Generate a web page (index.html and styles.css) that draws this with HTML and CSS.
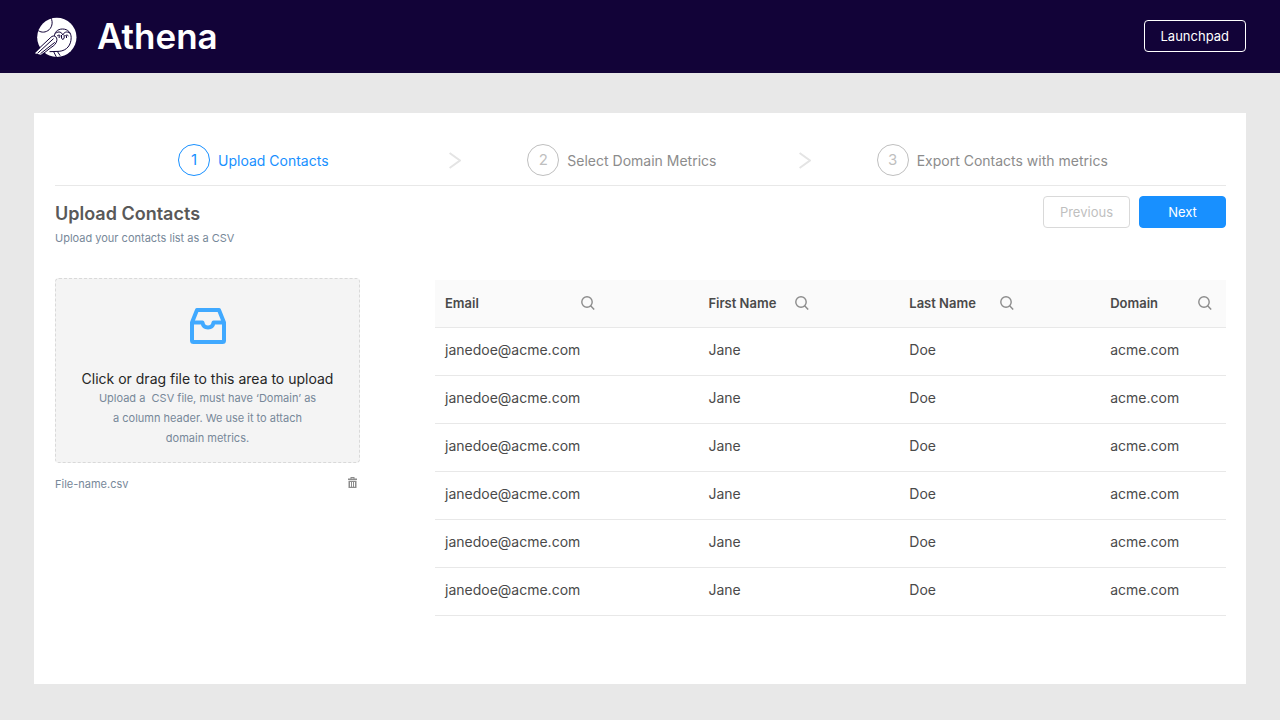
FILE: index.html
```html
<!DOCTYPE html>
<html lang="en">
<head>
  <meta charset="UTF-8">
  <meta name="viewport" content="width=device-width,initial-scale=1">
  <title>Athena</title>
  <link rel="stylesheet" href="styles.css">
</head>
<body>

  <svg class="sprite" aria-hidden="true">
    <symbol id="search" viewBox="0 0 14 14">
      <circle cx="6" cy="6" r="5.2"/>
      <path d="M9.6 9.8 13.2 13.6"/>
    </symbol>
    <symbol id="chevron" viewBox="0 0 12 17">
      <path d="M.6 1 11 8.500.6 16"/>
    </symbol>
  </svg>

  <header class="topbar">
    <div class="brand">
      <svg class="logo" viewBox="16 12 128 123" aria-hidden="true">
        <circle class="disc" cx="84" cy="73" r="59"/>
        <path class="line" d="M66 14C74 28 69 46 57 53C46 60 34 58 26 51"/>
        <path class="line" d="M77 74C75 58 86 48 101 48C117 48 127 59 127 74C127 96 114 113 91 115L62 116"/>
        <path class="line" d="M80 61C90 53 99 58 102 66C105 58 114 53 124 61M98 66V75L102 80L106 75V66M85 69C88 65 93 66 95 69M109 69C111 66 116 65 119 69M91 68V75M113 68V75"/>
        <path class="wing" d="M18 121 66 73C75 64 86 71 84 83C82 92 76 98 66 104L36 125Z"/>
        <path class="line" d="M18 118 66 73C75 64 86 71 84 83C82 92 76 98 66 104L42 123M26 121 74 77M35 122 78 88M75 117 83 133M86 116 94 128"/>
      </svg>
      <h1>Athena</h1>
    </div>
    <button class="btn btn-ghost" type="button">Launchpad</button>
  </header>

  <main>
    <section class="card">
      <ol class="steps">
        <li class="step active">
          <span class="num">1</span><span>Upload Contacts</span>
          <svg class="chevron" aria-hidden="true"><use href="#chevron"/></svg>
        </li>
        <li class="step">
          <span class="num">2</span><span>Select Domain Metrics</span>
          <svg class="chevron" aria-hidden="true"><use href="#chevron"/></svg>
        </li>
        <li class="step">
          <span class="num">3</span><span>Export Contacts with metrics</span>
        </li>
      </ol>

      <div class="heading">
        <div>
          <h2>Upload Contacts</h2>
          <p>Upload your contacts list as a CSV</p>
        </div>
        <div class="actions">
          <button class="btn" type="button" disabled>Previous</button>
          <button class="btn btn-primary" type="button">Next</button>
        </div>
      </div>

      <div class="content">
        <div class="upload">
          <input class="file-input" type="file" id="file" accept=".csv">
          <label class="dropzone" for="file">
            <svg class="inbox" viewBox="0 0 36 36" aria-hidden="true">
              <path d="M7 2H29L34 14.500V32.500Q34 34 32.500 34H3.500Q2 34 2 32.500V14.500Z"/>
              <path d="M2 14.500H12.500C13 18 15 19.500 18 19.500S23 18 23.500 14.500H34"/>
            </svg>
            <span class="drop-title">Click or drag file to this area to upload</span>
            <span class="drop-hint">Upload a &nbsp;CSV file, must have ‘Domain’ as<br>a column header. We use it to attach<br>domain metrics.</span>
          </label>
          <div class="file">
            <span>File-name.csv</span>
            <button class="icon-btn" type="button" aria-label="Delete file">
              <svg class="trash" viewBox="0 0 9 11" aria-hidden="true">
                <path d="M0 1.500H2.500V0H6.500V1.500H9V3H0ZM3.500 1V1.500H5.500V1ZM.5 3.800H8.500V11H.5ZM2 5V9.800H3V5ZM4 5V9.800H5V5ZM6 5V9.800H7V5Z"/>
              </svg>
            </button>
          </div>
        </div>

        <table class="contacts">
          <thead>
            <tr>
              <th class="col-email"><div class="th">Email <button class="icon-btn" type="button" aria-label="Search email"><svg class="search"><use href="#search"/></svg></button></div></th>
              <th class="col-first"><div class="th">First Name <button class="icon-btn" type="button" aria-label="Search first name"><svg class="search"><use href="#search"/></svg></button></div></th>
              <th class="col-last"><div class="th">Last Name <button class="icon-btn" type="button" aria-label="Search last name"><svg class="search"><use href="#search"/></svg></button></div></th>
              <th class="col-domain"><div class="th">Domain <button class="icon-btn" type="button" aria-label="Search domain"><svg class="search"><use href="#search"/></svg></button></div></th>
            </tr>
          </thead>
          <tbody>
            <tr><td>janedoe@acme.com</td><td>Jane</td><td>Doe</td><td>acme.com</td></tr>
            <tr><td>janedoe@acme.com</td><td>Jane</td><td>Doe</td><td>acme.com</td></tr>
            <tr><td>janedoe@acme.com</td><td>Jane</td><td>Doe</td><td>acme.com</td></tr>
            <tr><td>janedoe@acme.com</td><td>Jane</td><td>Doe</td><td>acme.com</td></tr>
            <tr><td>janedoe@acme.com</td><td>Jane</td><td>Doe</td><td>acme.com</td></tr>
            <tr><td>janedoe@acme.com</td><td>Jane</td><td>Doe</td><td>acme.com</td></tr>
          </tbody>
        </table>
      </div>
    </section>
  </main>

</body>
</html>
```
FILE: styles.css
```css
:root {
  --navy: #120338;
  --blue: #1890ff;
  --line: #e8e8e8;
  --muted: #778899;
  --grey: #8c8c8c;
  --text: #4a4a4a;
}
*, *::before, *::after { box-sizing: border-box; }
body {
  margin: 0;
  min-height: 100vh;
  display: flex;
  flex-direction: column;
  font-family: Inter, "Liberation Sans", sans-serif;
  font-size: 14px;
  background: #e8e8e8;
  color: var(--text);
}
h1, h2, p, ol { margin: 0; padding: 0; }
button { font-family: inherit; cursor: pointer; }
svg { display: block; }
.sprite { display: none; }

/* Top bar */
.topbar {
  display: flex;
  align-items: center;
  justify-content: space-between;
  min-height: 73px;
  padding: 0 34px 1px;
  background: var(--navy);
  color: #fff;
}
.brand { display: flex; align-items: flex-end; gap: 20px; }
.brand h1 { font-size: 35px; font-weight: 600; line-height: 44px; }
.logo { width: 43px; height: 41px; }
.logo .disc, .logo .wing { fill: #fff; }
.logo .line { fill: none; stroke: var(--navy); stroke-width: 3; stroke-linejoin: round; }

.btn {
  height: 32px;
  padding: 0 16px;
  border: 1px solid #d9d9d9;
  border-radius: 4px;
  background: #fff;
  font-size: 13px;
}
.btn:disabled { color: #bfbfbf; cursor: default; }
.btn-ghost { border-color: #fff; background: none; color: #fff; }
.btn-primary { min-width: 87px; border-color: var(--blue); background: var(--blue); color: #fff; }

main { flex: 1; display: flex; padding: 40px 34px 36px; }
.card { flex: 1; padding: 31px 20px 20px 21px; background: #fff; }

/* Steps */
.steps {
  display: grid;
  grid-template-columns: repeat(3, 1fr);
  padding-left: 123px;
  padding-bottom: 9px;
  border-bottom: 1px solid var(--line);
  list-style: none;
}
.step {
  display: flex;
  align-items: center;
  gap: 8px;
  color: var(--grey);
}
.num {
  width: 32px;
  height: 32px;
  border: 1px solid #bfbfbf;
  border-radius: 50%;
  color: #bfbfbf;
  font-size: 15px;
  line-height: 30px;
  text-align: center;
}
.active, .active .num { color: var(--blue); border-color: var(--blue); }
.chevron {
  width: 12px;
  height: 17px;
  margin-left: auto;
  margin-right: 66px;
  fill: none;
  stroke: #e4e4e4;
  stroke-width: 2;
}

.heading { display: flex; justify-content: space-between; padding-top: 10px; }
.heading h2 { padding-top: 6px; font-size: 18px; font-weight: 600; line-height: 24px; color: #595959; }
.heading p { padding-top: 2px; font-size: 11px; line-height: 20px; color: var(--muted); }
.actions { display: flex; gap: 9px; }

.content {
  display: grid;
  grid-template-columns: minmax(240px, 305px) 1fr;
  gap: 75px;
  align-items: start;
  padding-top: 30px;
}

/* Upload */
.file-input { position: absolute; opacity: 0; width: 1px; height: 1px; }
.dropzone {
  display: flex;
  flex-direction: column;
  align-items: center;
  padding: 29px 16px 14px;
  border: 1px dashed #d9d9d9;
  border-radius: 4px;
  background: #f4f4f4;
  text-align: center;
  cursor: pointer;
}
.inbox { width: 36px; height: 36px; fill: none; stroke: #40a9ff; stroke-width: 4; stroke-linejoin: round; }
.drop-title { padding-top: 25px; color: #262626; line-height: 19px; }
.drop-hint { color: var(--muted); font-size: 11px; line-height: 20px; }
.file {
  display: flex;
  align-items: center;
  justify-content: space-between;
  padding: 11px 3px 0 0;
  color: var(--muted);
  font-size: 11px;
  line-height: 20px;
}
.icon-btn { padding: 0; border: 0; background: none; color: var(--grey); }
.file .icon-btn { padding-bottom: 4px; }
.trash { width: 9px; height: 11px; fill: currentColor; fill-rule: evenodd; }

/* Contacts table */
.contacts {
  width: 100%;
  margin-top: 2px;
  border-collapse: collapse;
  table-layout: fixed;
  text-align: left;
}
.contacts th, .contacts td { height: 48px; padding: 0 0 4px 10px; border-bottom: 1px solid var(--line); }
.contacts th { height: 47px; padding-bottom: 0; background: #fafafa; font-size: 13px; font-weight: 600; }
.th { display: flex; align-items: center; justify-content: space-between; }
.search { width: 14px; height: 14px; fill: none; stroke: var(--grey); stroke-width: 1.4; }
.col-email { width: 33.3%; }
.col-first { width: 25.4%; }
.col-last { width: 25.4%; }
.col-domain { width: 15.9%; }
.contacts .col-email { padding-right: 103px; }
.contacts .col-first { padding-right: 90px; }
.contacts .col-last { padding-right: 86px; }
.contacts .col-domain { padding-right: 14px; }
```
